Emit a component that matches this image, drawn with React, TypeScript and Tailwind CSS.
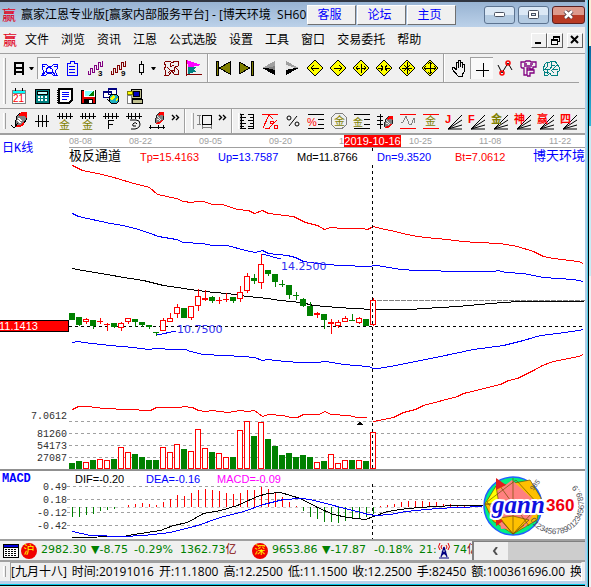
import type { ReactNode } from "react";

type Candle = {
  up: boolean;
  top: number;
  bottom: number;
  high: number;
  low: number;
  volume: number;
};

const c = (side: "r" | "g", top: number, bottom: number, high: number, low: number, volume: number): Candle => ({
  up: side === "r",
  top,
  bottom,
  high,
  low,
  volume,
});

// top, bottom, high and low of each day on the price panel, then the top of its volume bar
const candles: Candle[] = [
  c("g", 313, 320, 313, 320, 463),
  c("g", 317, 325, 317, 326, 461),
  c("r", 319, 322, 318, 324, 462),
  c("g", 320, 326, 320, 329, 460),
  c("r", 321, 322, 318, 324, 459),
  c("r", 324, 325, 323, 331, 460),
  c("g", 323, 327, 323, 328, 459),
  c("r", 323, 328, 322, 331, 447),
  c("r", 318, 322, 318, 324, 452),
  c("g", 319, 322, 319, 327, 454),
  c("g", 322, 325, 322, 327, 457),
  c("g", 325, 327, 325, 329, 460),
  c("g", 332, 333, 332, 336, 460),
  c("r", 320, 331, 318, 331, 447),
  c("r", 318, 322, 313, 322, 452),
  c("r", 307, 314, 304, 318, 444),
  c("g", 308, 318, 308, 318, 449),
  c("r", 306, 318, 306, 320, 451),
  c("r", 296, 306, 289, 311, 429),
  c("r", 298, 300, 290, 301, 448),
  c("g", 297, 301, 296, 303, 452),
  c("r", 300, 301, 297, 304, 453),
  c("r", 299, 300, 293, 302, 457),
  c("g", 297, 301, 297, 303, 457),
  c("r", 292, 299, 286, 302, 430),
  c("r", 276, 291, 273, 293, 421),
  c("g", 278, 281, 274, 284, 436),
  c("r", 264, 283, 254, 289, 422),
  c("g", 270, 274, 270, 276, 439),
  c("g", 274, 282, 274, 287, 446),
  c("g", 284, 285, 280, 287, 455),
  c("g", 285, 295, 285, 299, 453),
  c("g", 295, 296, 292, 300, 457),
  c("g", 299, 306, 298, 307, 455),
  c("g", 306, 316, 302, 316, 457),
  c("r", 313, 315, 312, 318, 462),
  c("g", 314, 320, 314, 329, 461),
  c("r", 322, 324, 319, 334, 454),
  c("r", 322, 326, 320, 328, 463),
  c("r", 318, 322, 316, 322, 460),
  c("g", 320, 321, 314, 321, 460),
  c("r", 318, 323, 317, 324, 460),
  c("g", 319, 326, 319, 326, 461),
  c("r", 300, 325, 298, 326, 432),
];

const upperBand =
  "72,165 82,170 97,173 110,176 130,182 149,187 157,194 176,198 183,201 191,202 197,201 203,201 212,204 222,204 237,209 248,210 254,213 262,210 268,213 277,214 283,215 293,216 305,222 317,225 324,229 330,227 342,228 362,228 367,229 373,226 380,228 395,231 402,233 417,236 435,238 447,239 462,241 477,242 500,243 517,246 533,251 543,256 553,258 578,261 583,263";
const upBand =
  "72,213 78,216 110,223 123,225 138,229 150,233 158,236 176,239 183,242 202,243 212,245 227,245 245,250 255,252 262,250 268,253 287,255 295,257 303,261 324,264 342,265 367,266 377,265 400,269 417,270 463,271 493,271 498,270 505,272 523,273 543,277 573,279 583,281";
const midBand =
  "72,268 82,270 107,274 123,277 143,280 163,285 197,290 213,292 227,293 247,296 267,298 280,300 300,302 305,303 313,305 337,307 372,309 410,309 423,308 457,306 490,303 517,301 583,301";
const downBand =
  "72,342 78,341 83,342 110,345 133,347 148,349 155,348 173,349 185,349 190,351 203,354 223,355 243,356 254,357 262,360 268,359 275,360 285,361 300,362 317,362 325,361 343,364 368,366 373,368 377,368 390,366 415,361 440,356 473,349 503,345 523,340 540,335 557,333 578,330 583,329";
const bottomBandPast =
  "72,409 78,406 88,406 103,408 128,409 135,409 142,410 150,410 156,407 180,407 183,406 192,407 198,410 205,411 212,410 227,412 240,410 247,411 254,410 262,416 268,414 283,415 290,417 297,417 303,414 319,414 324,411 331,414 348,415 357,417 366,417";
const bottomBandNext =
  "373,421 383,419 393,417 403,412 415,409 423,405 457,396 463,393 500,384 508,380 517,378 535,369 542,365 553,361 578,356 583,354";

// end of each MACD bar, measured from the zero line at 507
const macdBars = [
  517, 517, 515, 514, 511, 510, 509, 507, 505, 504, 503, 504, 505, 502, 499, 495, 496, 493, 490, 489, 490, 491, 493,
  494, 493, 490, 490, 487, 489, 492, 497, 502, 506, 511, 517, 519, 522, 522, 523, 521, 519, 519, 517, 514, 506, 505,
  504, 502, 501, 501, 501, 502, 502, 504, 504, 505, 505, 505, 505,
];
const difLine =
  "72,537 123,536 133,534 160,530 173,525 187,522 203,513 220,510 237,505 250,499 257,496 267,493 280,492 290,495 300,498 317,507 333,514 347,517 365,519 373,516 387,511 407,508 433,506 457,505 482,505";
const deaLine =
  "72,531 90,535 123,536 143,535 170,532 197,525 220,517 243,511 263,504 283,499 300,498 310,499 333,505 368,514 375,515 390,514 405,511 437,508 457,507 482,506";

const cjk = "font-['Liberation_Sans','Noto_Sans_CJK_SC',sans-serif]";
const ui = "font-['Open_Sans','Noto_Sans_CJK_SC',sans-serif]";
const mono = "font-['Liberation_Mono','Noto_Sans_CJK_SC',monospace]";
const wide = "font-['DejaVu_Sans','Noto_Sans_CJK_SC',sans-serif]";

function Icon({ children, stroke = "#000" }: { children: ReactNode; stroke?: string }) {
  return (
    <svg width="18" height="18" viewBox="0 0 18 18" fill="none" stroke={stroke} shapeRendering="crispEdges" aria-hidden="true">
      {children}
    </svg>
  );
}

function Tool({ label, pressed, children }: { label: string; pressed?: boolean; children: ReactNode }) {
  return (
    <button
      type="button"
      aria-label={label}
      className={`flex h-[22px] w-[23px] shrink-0 items-center justify-center ${
        pressed ? "border-t border-l border-[#a0a0a0] bg-[#f9f9f9]" : ""
      }`}
    >
      {children}
    </button>
  );
}

function DropArrow({ label }: { label: string }) {
  return (
    <button type="button" aria-label={label} className="-ml-[5px] flex h-[22px] w-3 shrink-0 items-center justify-center">
      <svg width="5" height="3" viewBox="0 0 5 3" aria-hidden="true">
        <path d="M0 0h5L3 3H2Z" />
      </svg>
    </button>
  );
}

function More() {
  return (
    <button type="button" aria-label="更多" className="flex h-[22px] w-[14px] shrink-0 items-start justify-center pt-1">
      <svg width="9" height="7" viewBox="0 0 9 7" fill="none" stroke="#000" strokeWidth="1.4" aria-hidden="true">
        <path d="m1 1 2.500 2.500L1 6M5 1l2.500 2.500L5 6" />
      </svg>
    </button>
  );
}

function Grip() {
  return <div className="my-1 mr-1 ml-[3px] w-[3px] shrink-0 self-stretch border-r border-l border-r-[#a0a0a0] border-l-white" />;
}

function Divider() {
  return <div className="mx-[2px] w-[2px] shrink-0 self-stretch border-r border-l border-r-white border-l-[#a0a0a0]" />;
}

function Char({ x, y, size, fill, children }: { x: number; y: number; size: number; fill: string; children: string }) {
  return (
    <text x={x} y={y} fontSize={size} fill={fill} stroke="none" className={cjk}>
      {children}
    </text>
  );
}

function Wave({ digit, color }: { digit: string; color: string }) {
  return (
    <Icon stroke={color}>
      <path d="M2.500 12v3.500h2v-6h2v4h2v-7h2v4h2v-7h2v4h2v-6" />
      <text x="12" y="17" fontSize="8" fontWeight="bold" fill="#000" stroke="none" className={cjk}>
        {digit}
      </text>
    </Icon>
  );
}

function Diamond({ d }: { d: string }) {
  return (
    <Icon>
      <path d="M9 1 17 9 9 17 1 9Z" fill="#ffff00" />
      <path d={d} />
    </Icon>
  );
}

function Comb({ children }: { children?: ReactNode }) {
  return (
    <Icon>
      <path d="M1 4h16M3 1v6M6 1v6M10 1v6M14 1v6" />
      {children}
    </Icon>
  );
}

function Fan({ char, color }: { char: string; color: string }) {
  return (
    <Icon>
      <path d="M3 17 17 3M3 17 17 8M3 17l14-4M3 17h14" shapeRendering="auto" />
      <text x="0" y="11" fontSize="11" fontWeight="bold" fill={color} stroke="none" className={cjk}>
        {char}
      </text>
    </Icon>
  );
}

function Pen() {
  return (
    <>
      <path d="m7 4 5-4 4 1v7l-3 5-6 1-2-2Z" fill="#808080" />
      <path d="m9 3 3-3h4v5l-2-2-3 1Z" fill="#ff0000" stroke="#ff0000" />
      <path d="m8 6 4 3M7 8l4 3" stroke="#fff" />
      <path d="m6 14 5-1 3-3-1 3-4 2Z" fill="#f00" stroke="#f00" />
    </>
  );
}

function QuickTools() {
  return (
    <div className="flex h-7 items-center">
      <Tool label="日线">
        <Icon>
          <path d="M5 3v13M13 3v13M5 4h8M5 9h8M5 13h8" strokeWidth="2" />
        </Icon>
      </Tool>
      <DropArrow label="选择周期" />
      <Tool label="股票池" pressed>
        <Icon stroke="#0000ff">
          <path d="M2 4h4l2 2h4l2-2h3v5l-2 2 2 4h-4l-2-2H8l-2 2H2l2-4-2-2ZM2 7l3-1M17 7l-3-1M6 9l3-2 3 2v3H6Zm-3 6 3-4M15 15l-3-4" />
        </Icon>
      </Tool>
      <Tool label="报告">
        <Icon stroke="#0000ff">
          <path d="M4 4h3V2h4v2h3v12H4ZM6 7h6M6 10h6M6 13h6" />
        </Icon>
      </Tool>
      <Tool label="三浪">
        <Wave digit="3" color="#800080" />
      </Tool>
      <Tool label="九浪">
        <Wave digit="9" color="#800000" />
      </Tool>
      <Tool label="蜡烛图">
        <Icon>
          <path d="M9 2v3M9 13v3M7 5h4v8H7Z" />
        </Icon>
      </Tool>
      <DropArrow label="选择图形" />
      <Tool label="主力">
        <Icon stroke="#800000">
          <path d="M4 2h4l2 2 3-2h3v5l-3 1 3 3v4h-4l-2-3-3 4H3l1-4-2-2 2-3-2-3ZM8 4v4l4-2M5 8l3 3M12 8v5M6 14l3-3h3" />
        </Icon>
      </Tool>
      <Tool label="筹码分布">
        <Icon stroke="none">
          <path d="M2 1 16 6 3 9Z" fill="#ff00ff" />
          <path d="M3 8h9l-4 3 4 1-9 3Z" fill="#008080" />
          <path d="M1 1h1v16H1ZM1 15h16v1H1Z" fill="#800000" />
        </Icon>
      </Tool>
      <Divider />
      <Tool label="首个">
        <Icon>
          <path d="M2 2h2v14H2Z" fill="#808000" />
          <path d="M16 3v12L5 9Z" fill="#808000" />
        </Icon>
      </Tool>
      <Tool label="末个">
        <Icon>
          <path d="M14 2h2v14h-2Z" fill="#808000" />
          <path d="M2 3v12l11-6Z" fill="#808000" />
        </Icon>
      </Tool>
      <Tool label="上一个">
        <Icon stroke="none">
          <path d="M2 9 15 2v7Z" fill="#a0a0a0" />
          <path d="M2 9h13v7Z" fill="#000" />
          <path d="m7 9 8-2v4Z" fill="#808080" />
        </Icon>
      </Tool>
      <Tool label="下一个">
        <Icon stroke="none">
          <path d="M16 9 3 2v7Z" fill="#a0a0a0" />
          <path d="M16 9H3v7Z" fill="#000" />
          <path d="M12 9 3 6v5Z" fill="#e8e8e8" />
        </Icon>
      </Tool>
      <Tool label="左移">
        <Diamond d="M5 9h8M8 6 5 9l3 3" />
      </Tool>
      <Tool label="右移">
        <Diamond d="M5 9h8M10 6l3 3-3 3" />
      </Tool>
      <Tool label="横向放大">
        <Diamond d="M4 9h4M10 9h4M6 7 4 9l2 2M12 7l2 2-2 2M9 5v9" />
      </Tool>
      <Tool label="横向缩小">
        <Diamond d="M3 9h4M11 9h4M6 6l2 3-2 3M12 6l-2 3 2 3" />
      </Tool>
      <Tool label="纵向缩小">
        <Diamond d="M9 3v12M4 9h10M6 6l6 6M12 6l-6 6" />
      </Tool>
      <Tool label="纵向放大">
        <Diamond d="M9 3v12M3 9h12M7 5l2-2 2 2M7 13l2 2 2-2M5 7 3 9l2 2M13 7l2 2-2 2" />
      </Tool>
      <Divider />
      <Tool label="拖动">
        <Icon>
          <path d="M6 11V3h2v6V1h2v7-5h2v6-4h2v8l-2 3v1H8L2 10V8h2l2 3" />
        </Icon>
      </Tool>
      <Tool label="十字光标" pressed>
        <Icon>
          <path d="M3 10h13M10 3v14" />
        </Icon>
      </Tool>
      <Tool label="连线">
        <Icon>
          <path d="m2 6 4 8 6-10 4 7" shapeRendering="auto" />
          <circle cx="6" cy="14" r="2" stroke="#f00" strokeWidth="1.500" shapeRendering="auto" />
          <circle cx="12" cy="4" r="2" stroke="#f00" strokeWidth="1.500" shapeRendering="auto" />
        </Icon>
      </Tool>
      <Tool label="工作区">
        <Icon stroke="#800080">
          <path d="M2 3h4l1-1h4l1 1h5v5h-3v2h-3v-1H8v7H5V9H3L2 8ZM5 5h3M11 5h3M5 7h8M8 11h7v3h-4v3H8" shapeRendering="auto" strokeWidth="1.300" />
        </Icon>
      </Tool>
      <Tool label="智能分析">
        <Icon stroke="#008080">
          <path d="M5 3h3l1-1h4l2 3 2 3v4l-2 1v3H9l-1-2-2 2H2v-4l-1-2 2-5ZM5 3l1 4-3 3h5l2-3M9 2v4h4M15 6l-4 4h5M5 11v4M9 11l3 3M3 13h4" />
        </Icon>
      </Tool>
    </div>
  );
}

function AppTools() {
  return (
    <div className="flex h-[25px] items-center">
      <Tool label="日历">
        <Icon stroke="#808080">
          <path d="M2 3h13v13H2Z" fill="#fff" />
          <path d="M2 3h13v3H2Z" fill="#00ffff" />
          <path d="M5 1v3M12 1v3" stroke="#000" />
          <Char x={3} y={15} size={10} fill="#f00">
            21
          </Char>
        </Icon>
      </Tool>
      <Tool label="计算器">
        <Icon>
          <path d="M2 2h14v14H2Z" fill="#008080" />
          <path d="M4 4h10v3H4Z" fill="#c0ffff" />
          <path d="M5 10h2M8 10h2M12 10h2M5 13h2M8 13h2M12 13h2" stroke="#fff" strokeWidth="2" />
        </Icon>
      </Tool>
      <Tool label="记事本">
        <Icon>
          <path d="M3 2h13v11l-3 3H3Z" fill="#fff" strokeWidth="2" />
          <path d="M2 3v13" strokeDasharray="1 1" strokeWidth="2" />
          <path d="M6 5h7M6 7h7M6 9h7M6 12h5" stroke="#0000ff" />
        </Icon>
      </Tool>
      <Tool label="保存">
        <Icon>
          <path d="M2 3h14v13H2Z" fill="#e00000" />
          <path d="M5 3h10v6H5Z" fill="#80ffff" stroke="#fff" />
          <path d="m9 9 6-5v5Z" fill="#008000" stroke="none" />
          <path d="M5 12h8v4H5Z" fill="#fff" />
          <path d="M6 13h3v3H6Z" fill="#000" />
        </Icon>
      </Tool>
      <Tool label="网络">
        <Icon>
          <path d="M6 1h8v6H6ZM1 4h8v6H1Z" fill="#fff" stroke="#000080" />
          <path d="M6 2h8M1 5h8" stroke="#000080" strokeWidth="2" />
          <circle cx="12" cy="12" r="5" fill="#20b0c0" />
          <path d="m8 11 3-3 2 2-3 4ZM13 13l3-2-1 4Z" fill="#ffff00" stroke="none" />
          <path d="m5 12 3 3" />
        </Icon>
      </Tool>
      <Tool label="远程">
        <Icon>
          <path d="M6 2h10v9H6Z" fill="#c0c090" />
          <path d="M8 4h6v5H8Z" fill="#0000c0" />
          <path d="M7 12h10v4H7Z" fill="#c0c090" />
          <path d="M2 8h4v8H2Z" fill="#fff" stroke="#808080" />
          <path d="M2 4h5v3H2Z" fill="#ff0" stroke="#808000" />
        </Icon>
      </Tool>
    </div>
  );
}

function DrawTools() {
  return (
    <div className="flex h-[26px] items-center border-b-2 border-[#a0a0a0]">
      <Grip />
      <div className="-ml-[3px] flex">
        <Tool label="画笔">
          <Icon>
            <Pen />
            <path d="m1 13 3 3 4-5" />
          </Icon>
        </Tool>
        <Tool label="等分线">
          <Icon>
            <path d="M2 9h14M5 3v12M9 3v12M13 3v12" />
          </Icon>
        </Tool>
        <Tool label="黄金周期">
          <Comb>
            <Char x={3} y={17} size={11} fill="#808000">
              金
            </Char>
          </Comb>
        </Tool>
        <Tool label="黄金分割">
          <Comb>
            <Char x={3} y={17} size={11} fill="#808000">
              金
            </Char>
          </Comb>
        </Tool>
        <Tool label="斐波那契">
          <Comb>
            <path d="M6 17V8h6M6 12h5" />
          </Comb>
        </Tool>
        <Tool label="螺旋">
          <Comb>
            <path d="M5 8h6q4 0 4 4t-5 5H6M12 12q-1-2-3-1t-1 3h3" shapeRendering="auto" />
          </Comb>
        </Tool>
        <Tool label="标注画笔">
          <Icon>
            <g transform="translate(3 0) scale(0.800)">
              <Pen />
            </g>
            <path d="M1 15h16M2 13v4M10 13v4M15 13v4" />
          </Icon>
        </Tool>
      </div>
      <More />
      <Divider />
      <Grip />
      <div className="-ml-[6px] flex">
        <Tool label="区间">
          <Icon>
            <path d="M7 3h9v9H7Z" />
            <path d="M2 3h4M2 12h4M4 3v9M7 15h9M7 13v4M16 13v4" stroke="#808080" />
          </Icon>
        </Tool>
      </div>
      <More />
      <Divider />
      <Grip />
      <div className="-ml-[10px] flex min-w-0">
        <Tool label="价格尺">
          <Icon>
            <path d="M2 2h4M2 5h6M2 8h4M2 11h6M2 14h4M2 16h6M10 2h6M12 5h4M10 8h6M12 11h4M10 14h6M10 16h6" />
            <path d="M3 2v15M15 2v15" />
          </Icon>
        </Tool>
        <Tool label="百分比线">
          <Icon stroke="#f00">
            <path d="M1 2h16M2 16 8 3l4 4M4 16h5" />
            <path d="m8 16 8-8M9 9h3v2H9ZM13 13h3v3h-3Z" />
          </Icon>
        </Tool>
        <Tool label="百分比">
          <Icon>
            <circle cx="5" cy="6" r="2" shapeRendering="auto" />
            <circle cx="13" cy="12" r="2" shapeRendering="auto" />
            <path d="M13 4 5 14" shapeRendering="auto" />
          </Icon>
        </Tool>
        <Tool label="百分比标线">
          <Icon>
            <path d="M1 2h16M11 7h6M11 12h6M1 16h16" />
            <Char x={0} y={14} size={11} fill="#f00">
              %
            </Char>
          </Icon>
        </Tool>
        <Tool label="黄金圆">
          <Icon stroke="#808080">
            <circle cx="9" cy="9" r="8" />
            <Char x={4} y={13} size={11} fill="#808000">
              金
            </Char>
          </Icon>
        </Tool>
        <Tool label="黄金标线">
          <Icon>
            <path d="M1 2h16M11 7h6M11 12h6M1 16h16" />
            <Char x={0} y={14} size={10} fill="#808000">
              金
            </Char>
          </Icon>
        </Tool>
        <Tool label="价格画笔">
          <Icon>
            <path d="M4 2v15M1 4h6M1 8h6M1 12h6" />
            <g transform="translate(4 4) scale(0.800)">
              <Pen />
            </g>
          </Icon>
        </Tool>
        <Tool label="波浪">
          <Icon stroke="#808080">
            <path d="M1 2h16M1 16h16" stroke="#f00" />
            <path d="M2 10h2l3-6 3 8 2 1 3-7v5" />
          </Icon>
        </Tool>
        <Tool label="黄金线">
          <Icon stroke="#f00">
            <path d="M1 2h16M1 16h16" />
            <Char x={3} y={13} size={11} fill="#808000">
              金
            </Char>
          </Icon>
        </Tool>
        <Tool label="江恩角度">
          <Fan char="J" color="#ff0000" />
        </Tool>
        <Tool label="斐氏角度">
          <Fan char="F" color="#ff0000" />
        </Tool>
        <Tool label="黄金角度">
          <Fan char="金" color="#808000" />
        </Tool>
        <Tool label="神奇角度">
          <Fan char="神" color="#ff0000" />
        </Tool>
        <Tool label="赢家角度">
          <Fan char="赢" color="#ff0000" />
        </Tool>
        <Tool label="四方角度">
          <Fan char="四" color="#ff0000" />
        </Tool>
      </div>
    </div>
  );
}

function TitleBar() {
  const shortcut =
    "h-5 w-[49px] border border-t-white border-r-[#707070] border-b-[#707070] border-l-white bg-[#f0f0f0] pr-1 text-[12px] leading-4 text-[#0000ff]";
  const control =
    "flex h-[18px] items-center justify-center rounded-[3px] border border-[#5c7390] bg-linear-to-b from-[#dbe8f5] from-50% to-[#b4cbe2] to-50%";
  return (
    <header className="flex h-[27px] items-center border-t-2 border-[#303540] bg-linear-to-b from-[#98b3d2] to-[#bbd1e9]">
      <span className="ml-[2px] w-[15px] shrink-0 text-[14px] leading-5 text-[#e00020]">赢</span>
      <h1 className="ml-1 w-[286px] shrink-0 overflow-hidden text-[12px] leading-5 whitespace-pre text-black">
        赢家江恩专业版[赢家内部服务平台] - [博天环境{"  "}SH60
      </h1>
      <div className="flex shrink-0 gap-px">
        <button type="button" className={shortcut}>客服</button>
        <button type="button" className={shortcut}>论坛</button>
        <button type="button" className={shortcut}>主页</button>
      </div>
      <div className="ml-auto flex gap-[3px]">
        <button type="button" aria-label="最小化" className={`${control} w-[31px]`}>
          <svg width="11" height="5" viewBox="0 0 11 5" aria-hidden="true">
            <rect x="0.500" y="0.500" width="10" height="4" rx="1" fill="#fff" stroke="#4a5262" />
          </svg>
        </button>
        <button type="button" aria-label="最大化" className={`${control} w-[31px]`}>
          <svg width="11" height="9" viewBox="0 0 11 9" fill="none" aria-hidden="true">
            <rect x="2" y="2" width="7" height="5" stroke="#fff" strokeWidth="3" />
            <rect x="0.500" y="0.500" width="10" height="8" rx="1" stroke="#4a5262" />
            <rect x="3.500" y="3.500" width="4" height="2" stroke="#4a5262" />
          </svg>
        </button>
        <button
          type="button"
          aria-label="关闭"
          className="flex h-[18px] w-[33px] items-center justify-center rounded-[3px] border border-[#5c2020] bg-linear-to-b from-[#dd9a8c] from-50% to-[#b83a24] to-50%"
        >
          <svg width="11" height="9" viewBox="0 0 11 9" fill="none" aria-hidden="true">
            <path d="m2 1 7 7M9 1 2 8" stroke="#45323a" strokeWidth="4" />
            <path d="m2 1 7 7M9 1 2 8" stroke="#fff" strokeWidth="2.500" />
          </svg>
        </button>
      </div>
    </header>
  );
}

function MenuBar() {
  const menus = ["文件", "浏览", "资讯", "江恩", "公式选股", "设置", "工具", "窗口", "交易委托", "帮助"];
  const box =
    "flex h-[15px] w-4 items-center justify-center border border-t-white border-r-[#606060] border-b-[#606060] border-l-white bg-[#f0f0f0]";
  return (
    <nav className="flex h-[27px] items-center border-b border-[#a0a0a0]" aria-label="主菜单">
      <span className="ml-[3px] w-[22px] shrink-0 text-[14px] leading-5 text-[#e00020]">赢</span>
      <div className="flex gap-3 text-[12px] leading-5">
        {menus.map((m) => (
          <button key={m} type="button" className="shrink-0 whitespace-nowrap">
            {m}
          </button>
        ))}
      </div>
      <div className="mr-[2px] ml-auto flex">
        <button type="button" aria-label="最小化子窗口" className={box}>
          <svg width="10" height="10" viewBox="0 0 10 10" aria-hidden="true">
            <path d="M1 7h6v2H1Z" />
          </svg>
        </button>
        <button type="button" aria-label="还原子窗口" className={box}>
          <svg width="10" height="10" viewBox="0 0 10 10" fill="none" stroke="#000" shapeRendering="crispEdges" aria-hidden="true">
            <path d="M3 4V1h6v5H7M3 2h6M1 4h6v5H1ZM1 5h6" />
          </svg>
        </button>
        <button type="button" aria-label="关闭子窗口" className={`${box} ml-1`}>
          <svg width="10" height="10" viewBox="0 0 10 10" stroke="#000" strokeWidth="2" aria-hidden="true">
            <path d="m1 1 7 7M8 1 1 8" />
          </svg>
        </button>
      </div>
    </nav>
  );
}

function PriceChart() {
  const dates = ["08-22", "09-05", "09-20"];
  return (
    <section className="bg-white" aria-label="日K线">
      <div className="flex h-[29px]">
        <h2 className={`w-[69px] shrink-0 pt-1 pl-[2px] text-[12px] leading-5 text-[#0000ff] ${mono}`}>日K线</h2>
        <div className={`min-w-0 flex-1 ${cjk}`}>
          <div className="flex h-[13px] overflow-hidden border-b border-[#a0a0a0] text-[9px] leading-[13px] text-[#a0a0a0]">
            <span className="w-[60px] shrink-0">08-08</span>
            {dates.map((d) => (
              <span key={d} className="w-[70px] shrink-0">
                {d}
              </span>
            ))}
            <span className="w-[5px] shrink-0 overflow-hidden">10</span>
            <span className="mr-2 w-[57px] shrink-0 bg-[#ff0000] text-center text-[11px] leading-3 text-white">2019-10-16</span>
            <span className="w-[70px] shrink-0">10-25</span>
            <span className="w-[70px] shrink-0">11-08</span>
            <span className="shrink-0">11-22</span>
          </div>
          <div className="flex h-4 text-[11px] leading-[18px] whitespace-nowrap">
            <span className="w-[71px] shrink-0 text-[13px] leading-4">极反通道</span>
            <span className="w-[78px] shrink-0 text-[#ff0000]">Tp=15.4163</span>
            <span className="w-[79px] shrink-0 text-[#0000ff]">Up=13.7587</span>
            <span className="w-20 shrink-0">Md=11.8766</span>
            <span className="w-[78px] shrink-0 text-[#0000ff]">Dn=9.3520</span>
            <span className="shrink-0 text-[#ff0000]">Bt=7.0612</span>
            <span className="ml-auto text-[13px] leading-4 text-[#0000ff]">博天环境</span>
          </div>
        </div>
      </div>
      <svg viewBox="0 164 585 305" className="block w-full overflow-visible" fill="none" role="img" aria-label="价格与成交量">
        <g shapeRendering="crispEdges">
          <g stroke="#a0a0a0" strokeDasharray="3 3">
            <path d="M69 421.500H583M69 433.500H583M69 445.500H583M69 457.500H583" />
          </g>
          <path d="M372.500 148V151" stroke="#000" />
          <path d="M69 326.500H583" stroke="#000" strokeDasharray="3 3" />
          <path d="M377 300.500H585" stroke="#808080" strokeDasharray="5 1" />
          <g transform="translate(0.500 0.500)">
            <polyline points={upperBand} stroke="#ff0000" />
            <polyline points={upBand} stroke="#0000ff" />
            <polyline points={midBand} stroke="#000" />
            <polyline points={downBand} stroke="#0000ff" />
            <polyline points={bottomBandPast} stroke="#ff0000" />
            <polyline points={bottomBandNext} stroke="#ff0000" />
          </g>
          {candles.map((d, i) => {
            const x = 69 + i * 7;
            const color = d.up ? "#ff0000" : "#008000";
            const hollow = d.up && d.bottom - d.top > 2;
            return (
              <g key={i}>
                <rect x={x + 3} y={d.high} width="1" height={d.low - d.high} fill={color} />
                <rect x={x} y={d.top} width="6" height={d.bottom - d.top} fill={color} />
                {hollow && <rect x={x + 1} y={d.top + 1} width="4" height={d.bottom - d.top - 2} fill="#fff" />}
                <rect x={x} y={d.volume} width="6" height={469 - d.volume} fill={color} />
                {d.up && <rect x={x + 1} y={d.volume + 1} width="4" height={467 - d.volume} fill="#fff" />}
              </g>
            );
          })}
          <path d="M372.500 165V469" stroke="#000" strokeDasharray="3 3" />
          <path d="m262 254 19 5M157 335l19-4" stroke="#0000ff" />
          <path d="m356 425 3-3h1l3 3Z" fill="#000" />
          <path d="M0 320h69v12H0Z" fill="#000" />
          <path d="M0 321h68v10H0Z" fill="#ff0000" />
        </g>
        <text x="-1" y="330" fontSize="11" fill="#fff" className={cjk}>11.1413</text>
        <g fontSize="11" fill="#3030f0" className={wide}>
          <text x="281" y="270">14.2500</text>
          <text x="177" y="333">10.7500</text>
        </g>
        <g fontSize="10" fill="#303030" textAnchor="end" className={mono}>
          <text x="67" y="419">7.0612</text>
          <text x="67" y="437">81260</text>
          <text x="67" y="449">54173</text>
          <text x="67" y="461">27087</text>
        </g>
      </svg>
    </section>
  );
}

function Logo() {
  return (
    <g>
      <circle cx="513" cy="506" r="29" fill="#00f080" stroke="#2060ff" strokeWidth="1.500" />
      <path d="m485 504 13-18 32-6 11 18-4 22-24 14-20-13Z" fill="#ffc000" stroke="#705000" strokeWidth="0.700" />
      <path d="m496 492 16-12 27 25-14 22-24 2Z" fill="#ff8080" />
      <path d="M485 504h14l-3-18ZM513 534l-1-17 12 8Z" fill="#ffff00" stroke="#705000" strokeWidth="0.700" />
      <path d="m499 518 14 16 16-14-16-4Z" fill="#ffc000" stroke="#705000" strokeWidth="0.700" />
      <path d="m487 502 29-22 23 25-26 29ZM513 478v56M497 482l32 44M486 504h52" stroke="#705000" strokeWidth="0.700" />
      <path d="M496 478v12l10-5ZM496 516v10l7-5Z" fill="#e02020" />
      <path id="ring" d="M530 520A29 29 0 1 0 565 478" />
      <text fontSize="8" fill="#505058" className={cjk}>
        <textPath href="#ring">01234567890123456789..9</textPath>
      </text>
      <text x="533" y="491" fontSize="7" fill="#505058" transform="rotate(-50 533 491)" className={cjk}>
        985
      </text>
      <text x="492" y="513" fontSize="25" fontStyle="italic" fontWeight="bold" fill="#1010e0" stroke="#fff" strokeWidth="4" paintOrder="stroke" strokeLinejoin="round" className="font-['Liberation_Serif',serif]">
        gann
      </text>
      <text x="546" y="511" fontSize="17" fontWeight="bold" fill="#f00010" stroke="#fff" strokeWidth="2" paintOrder="stroke" className={cjk}>
        360
      </text>
    </g>
  );
}

function MacdChart() {
  return (
    <section className="border-t-2 border-[#909090] bg-white" aria-label="MACD">
      <div className={`flex h-[14px] text-[11px] leading-4 ${cjk}`}>
        <h2 className={`w-[75px] shrink-0 pl-[2px] text-[12px] font-bold text-[#0000ff] ${mono}`}>MACD</h2>
        <span className="w-[71px] shrink-0">DIF=-0.20</span>
        <span className="w-[71px] shrink-0 text-[#0000ff]">DEA=-0.16</span>
        <span className="text-[#ff00ff]">MACD=-0.09</span>
      </div>
      <svg viewBox="0 485 585 54" className="block w-full overflow-visible" fill="none" role="img" aria-label="MACD指标">
        <g shapeRendering="crispEdges">
          <path d="M67 486.500H482M67 499.500H482M67 512.500H482M67 525.500H482" stroke="#a0a0a0" strokeDasharray="3 3" />
          <path d="M67 507.500H482" stroke="#c8c8c8" strokeDasharray="3 3" />
          <path d="M372.500 484V539" stroke="#000" strokeDasharray="3 3" />
          {macdBars.map((y, i) => (
            <rect
              key={i}
              x={72 + i * 7}
              y={Math.min(y, 507)}
              width="1"
              height={Math.abs(y - 507)}
              fill={y > 507 ? "#008000" : "#ff0000"}
            />
          ))}
          <g transform="translate(0.500 0.500)">
            <polyline points={difLine} stroke="#000" />
            <polyline points={deaLine} stroke="#0000ff" />
          </g>
        </g>
        <g fontSize="10" fill="#303030" textAnchor="end" className={mono}>
          <text x="67" y="490">0.49</text>
          <text x="67" y="503">0.18</text>
          <text x="67" y="516">-0.12</text>
          <text x="67" y="529">-0.42</text>
        </g>
        <Logo />
      </svg>
    </section>
  );
}

function Market({ name }: { name: string }) {
  return (
    <span className="flex h-4 w-4 shrink-0 items-center justify-center rounded-full bg-[#f00000] text-[11px] leading-4 text-[#ffff00]">
      {name}
    </span>
  );
}

function QuoteBar() {
  return (
    <div className={`flex h-[21px] items-center border-t-2 border-[#a0a0a0] pl-[3px] text-[11px] whitespace-nowrap text-[#008000] ${wide}`}>
      <svg width="16" height="14" viewBox="0 0 16 14" className="mr-[2px] shrink-0" shapeRendering="crispEdges" aria-hidden="true">
        <path d="M0 0h16v14H0Z" />
        <path d="M1 1h14v2H1Z" fill="#0000e0" />
        <path d="M1 4h14v9H1Z" fill="#fff" />
        <path d="M2 5.500h12M2 7.500h12M2 9.500h12M2 11.500h12" stroke="#000" strokeDasharray="2 1" />
      </svg>
      <Market name="沪" />
      <span className="ml-1 w-[50px] shrink-0">2982.30</span>
      <span className="w-[43px] shrink-0">▼-8.75</span>
      <span className="w-[46px] shrink-0">-0.29%</span>
      <span className="w-[72px] shrink-0">
        1362.73<span className="text-[#800000]">亿</span>
      </span>
      <Market name="深" />
      <span className="ml-1 w-[50px] shrink-0">9653.86</span>
      <span className="w-[52px] shrink-0">▼-17.87</span>
      <span className="w-[45px] shrink-0">-0.18%</span>
      <span className="w-[18px] shrink-0">21:</span>
      <svg width="14" height="16" viewBox="0 0 14 16" className="shrink-0" fill="none" stroke="#000080" aria-hidden="true">
        <path d="M7 4 4 14M7 4l3 10M5 10h4M5 8l4 4M9 8l-4 4M2 15h10" strokeWidth="1.200" />
        <path d="M3 0q-3 4 0 7M11 0q3 4 0 7M5 2q-2 2 0 4M9 2q2 2 0 4" stroke="#e00000" />
      </svg>
      <span className="ml-[2px] w-[19px] shrink-0 overflow-hidden">
        74<span className="text-[#800000]">亿</span>
      </span>
      <div className="flex h-full min-w-0 flex-1 border-t border-l-2 border-[#808080] bg-[#cdcdcd]">
        <button type="button" aria-label="向左滚动" className="flex h-full w-[34px] items-center justify-center bg-[#f0f0f0] pl-2">
          <svg width="6" height="8" viewBox="0 0 6 8" fill="none" stroke="#505050" strokeWidth="2" aria-hidden="true">
            <path d="M5 0 2 4l3 4" />
          </svg>
        </button>
      </div>
    </div>
  );
}

function StatusBar() {
  const fields = [
    "[九月十八]",
    "时间:20191016",
    "开:11.1800",
    "高:12.2500",
    "低:11.1500",
    "收:12.2500",
    "手:82450",
    "额:100361696.00",
    "换",
  ];
  return (
    <footer className="flex h-[21px] items-stretch border-t-2 border-[#a0a0a0]">
      <Grip />
      <div className="mr-[3px] flex min-w-0 flex-1 gap-[5px] overflow-hidden border border-t-[#a0a0a0] border-r-white border-b-white border-l-[#a0a0a0] text-[12px] leading-[17px] whitespace-nowrap">
        {fields.map((f) => (
          <span key={f} className="shrink-0">
            {f}
          </span>
        ))}
      </div>
    </footer>
  );
}

export default function App() {
  return (
    <div className={`flex w-full bg-[#f0f0f0] text-black ${ui}`}>
      <div className="flex min-w-0 flex-1 flex-col">
        <TitleBar />
        <MenuBar />
        <div className="flex border-b border-[#a0a0a0]">
          <Grip />
          <div className="mr-[6px] -ml-[3px] min-w-0 flex-1">
            <QuickTools />
            <div className="ml-1 border-t border-[#a0a0a0]" />
            <AppTools />
          </div>
        </div>
        <DrawTools />
        <PriceChart />
        <MacdChart />
        <QuoteBar />
        <StatusBar />
        <div className="h-1 border-b border-[#00c8e8] bg-[#b9d1ea]" />
        <div className="h-[2px] border-t border-black bg-[#d8ece8]" />
      </div>
      <div className="flex w-[6px] shrink-0">
        <div className="w-[3px] border-r border-[#50d0e8] bg-[#b0cce6]" />
        <div className="w-px bg-black" />
        <div className="flex flex-1 flex-col">
          <div className="h-[46px] bg-[#f8f0d8]" />
          <div className="h-[80px] bg-linear-to-b from-[#0868a0] to-[#30b8d8]" />
          <div className="h-[150px] bg-[#c8ecf4]" />
          <div className="flex-1 bg-[#f0f2f4]" />
        </div>
      </div>
    </div>
  );
}
